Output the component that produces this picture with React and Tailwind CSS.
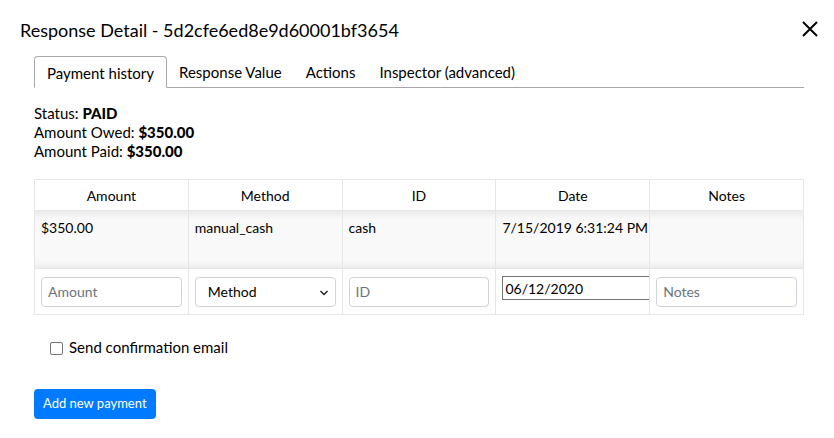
import React from "react";

const font = { fontFamily: "Lato, 'Noto Sans', sans-serif" };

export default function App() {
  return (
    <div className="w-[834px] h-[438px] bg-white text-black overflow-hidden" style={font}>
      <div className="flex items-start justify-between pl-[20px] pr-[14px] pt-[18px]">
        <h1 className="text-[18px] leading-[24px] font-normal">Response Detail - 5d2cfe6ed8e9d60001bf3654</h1>
        <svg width="20" height="20" viewBox="0 0 20 20" className="mt-[1px]">
          <path d="M3 3 L17 17 M17 3 L3 17" stroke="#000" strokeWidth="2" />
        </svg>
      </div>
      <div className="px-[34px] pr-[30px]">
        <div className="mt-[14px] flex border-b border-[#a8a8a8] text-[15px] leading-[20px]">
          <div className="px-[12px] pt-[6px] pb-[4px] border border-[#a8a8a8] border-b-white rounded-t-[4px] -mb-px bg-white">Payment history</div>
          <div className="px-[12px] pt-[6px] pb-[4px]">Response Value</div>
          <div className="px-[12px] pt-[6px] pb-[4px]">Actions</div>
          <div className="px-[12px] pt-[6px] pb-[4px]">Inspector (advanced)</div>
        </div>
        <div className="mt-[16px] text-[15px] leading-[19px]">
          <div>Status: <b className="font-black">PAID</b></div>
          <div>Amount Owed: <b className="font-black">$350.00</b></div>
          <div>Amount Paid: <b className="font-black">$350.00</b></div>
        </div>
        <table className="mt-[18px] w-[770px] table-fixed border-collapse text-[14px]">
          <thead>
            <tr className="h-[31px]">
              {["Amount", "Method", "ID", "Date", "Notes"].map((h) => (
                <th key={h} className="border border-[#e6e6e6] font-normal text-center">{h}</th>
              ))}
            </tr>
          </thead>
          <tbody>
            <tr className="h-[58px] bg-[#f9f9f9] shadow-[inset_0_10px_10px_-8px_rgba(0,0,0,0.09),inset_0_-10px_10px_-8px_rgba(0,0,0,0.09)]">
              {["$350.00", "manual_cash", "cash", "7/15/2019 6:31:24 PM", ""].map((c, i) => (
                <td key={i} className="border-x border-[#e6e6e6] align-top px-[6px] pt-[6px] whitespace-nowrap">{c}</td>
              ))}
            </tr>
            <tr className="h-[46px]">
              <td className="border border-[#e6e6e6] px-[6px]">
                <input placeholder="Amount" className="w-full h-[30px] border border-[#ced4da] rounded-[4px] px-[6px] text-[14px] placeholder:text-[#6c757d]" style={font} />
              </td>
              <td className="border border-[#e6e6e6] px-[6px]">
                <div className="relative w-full h-[30px] border border-[#ced4da] rounded-[4px] flex items-center px-[12px] text-[14px]">
                  <span>Method</span>
                  <svg width="10" height="10" viewBox="0 0 10 10" className="absolute right-[6px] top-[10px]">
                    <path d="M1.5 3 L5 6.5 L8.5 3" stroke="#222" strokeWidth="1.5" fill="none" />
                  </svg>
                </div>
              </td>
              <td className="border border-[#e6e6e6] px-[6px]">
                <input placeholder="ID" className="w-full h-[30px] border border-[#ced4da] rounded-[4px] px-[6px] text-[14px] placeholder:text-[#6c757d]" style={font} />
              </td>
              <td className="border border-[#e6e6e6] pl-[6px] overflow-hidden align-top pt-[7px]">
                <div className="w-[170px] h-[24px] border border-[#767676] flex items-center px-[2px] text-[14px] whitespace-nowrap">06/12/2020</div>
              </td>
              <td className="border border-[#e6e6e6] px-[6px]">
                <input placeholder="Notes" className="w-full h-[30px] border border-[#ced4da] rounded-[4px] px-[6px] text-[14px] placeholder:text-[#6c757d]" style={font} />
              </td>
            </tr>
          </tbody>
        </table>
        <label className="mt-[21px] ml-[16px] flex items-center gap-[6px] text-[15px]">
          <span className="w-[13px] h-[13px] border border-[#767676] rounded-[2px] bg-white mt-[3px]"></span>
          <span>Send confirmation email</span>
        </label>
        <button className="mt-[30px] h-[30px] px-[9px] bg-[#007bff] text-white text-[13px] rounded-[4px]" style={font}>Add new payment</button>
      </div>
    </div>
  );
}
